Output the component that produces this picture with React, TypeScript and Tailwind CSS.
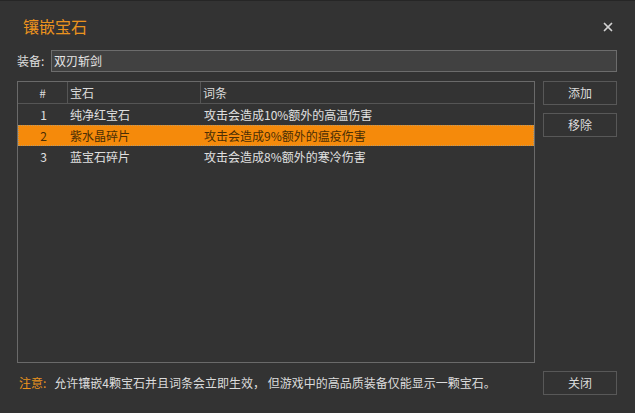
import { X } from 'lucide-react';

const gems = [
    { id: 1, name: '纯净红宝石', effect: '攻击会造成10%额外的高温伤害' },
    { id: 2, name: '紫水晶碎片', effect: '攻击会造成9%额外的瘟疫伤害' },
    { id: 3, name: '蓝宝石碎片', effect: '攻击会造成8%额外的寒冷伤害' },
];

const selected = 2;

function DarkButton({ label }: { label: string }) {
    return (
        <button className="h-[24px] w-[74px] border border-[#585858] bg-[#333333] text-[12px] leading-none text-[#dcdcdc]">
            {label}
        </button>
    );
}

export default function App() {
    return (
        <div
            className="flex h-[413px] w-[635px] flex-col border-t border-[#262626] bg-[#333333] text-[12px] text-[#e0e0e0]"
            style={{ fontFamily: '"Noto Sans CJK SC", "Noto Sans", sans-serif' }}
        >
            {/* Title bar */}
            <div className="flex h-[49px] items-center justify-between pl-[23px] pr-[20px]">
                <span className="text-[16px] text-[#ea921e]">镶嵌宝石</span>
                <X className="mt-[3px] h-[14px] w-[14px] text-[#d2d2d2]" strokeWidth={3} />
            </div>

            {/* Equipment */}
            <div className="flex items-center pl-[17px] pr-[18px]">
                <span className="w-[34px] text-[#dcdcdc]">装备:</span>
                <div className="flex h-[22px] flex-1 items-center border border-[#6c6c6c] bg-[#414141] px-[2px] text-[#e6e6e6]">
                    双刃斩剑
                </div>
            </div>

            {/* Table + side buttons */}
            <div className="mt-[9px] flex gap-[8px] pl-[17px] pr-[18px]">
                <div className="h-[282px] w-[518px] border border-[#6a6a6a] bg-[#333333]">
                    <div className="flex h-[22px] items-center border-b border-[#555555] text-[#dcdcdc]">
                        <div className="flex h-full w-[50px] items-center justify-center border-r border-[#555555]">#</div>
                        <div className="flex h-full w-[133px] items-center border-r border-[#555555] pl-[2px]">宝石</div>
                        <div className="flex h-full flex-1 items-center pl-[2px]">词条</div>
                    </div>
                    {gems.map((g) => (
                        <div
                            key={g.id}
                            className={
                                g.id === selected
                                    ? 'flex h-[21px] items-center border border-dotted border-[#b89a6a] bg-[#f58a0b] text-[#4a2e05]'
                                    : 'flex h-[21px] items-center border border-transparent'
                            }
                        >
                            <div className="w-[49px] text-center">{g.id}</div>
                            <div className="w-[134px] pl-[2px]">{g.name}</div>
                            <div className="flex-1 pl-[2px]">{g.effect}</div>
                        </div>
                    ))}
                </div>
                <div className="flex flex-col gap-[8px]">
                    <DarkButton label="添加" />
                    <DarkButton label="移除" />
                </div>
            </div>

            {/* Footer */}
            <div className="mt-[8px] flex items-center justify-between pl-[19px] pr-[18px]">
                <p>
                    <span className="text-[#ea921e]">注意:</span>
                    <span className="ml-[8px] text-[#dcdcdc]">
                        允许镶嵌4颗宝石并且词条会立即生效， 但游戏中的高品质装备仅能显示一颗宝石。
                    </span>
                </p>
                <DarkButton label="关闭" />
            </div>
        </div>
    );
}
